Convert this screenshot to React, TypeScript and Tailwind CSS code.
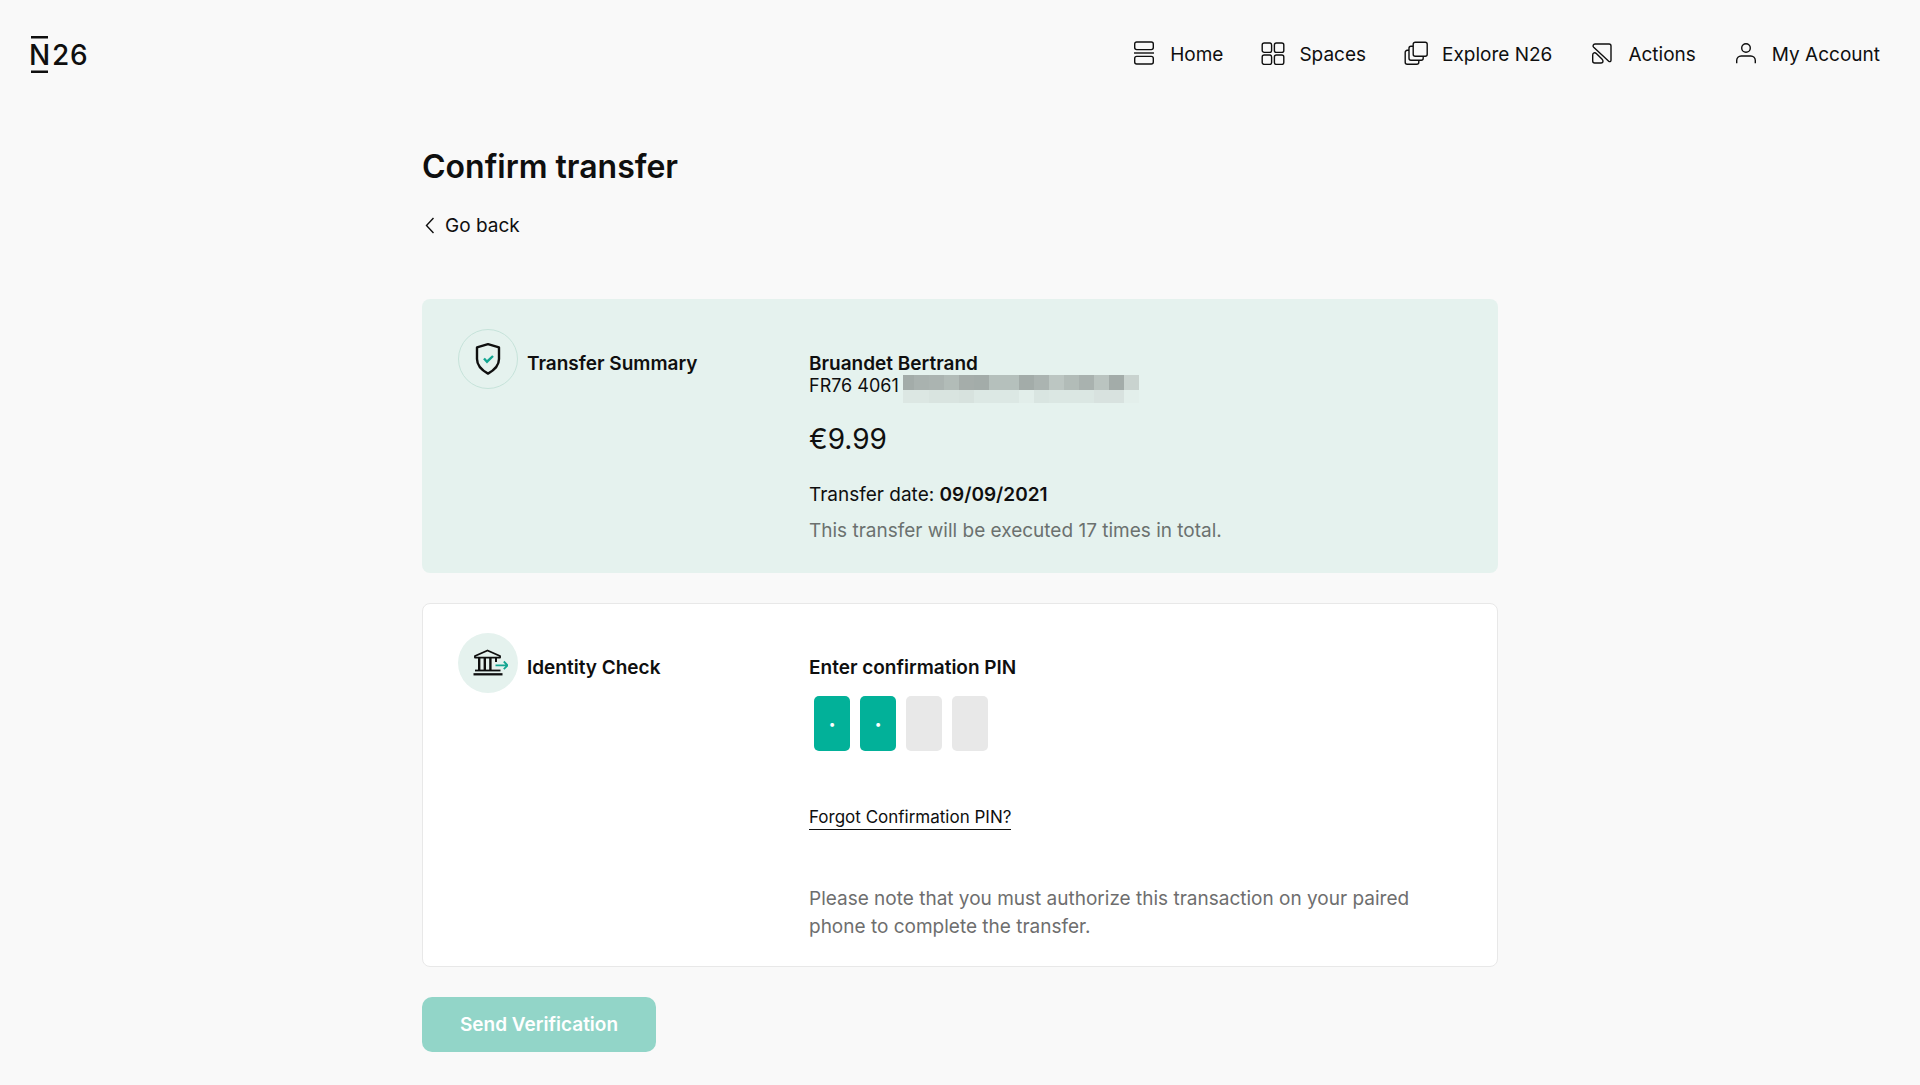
import type { ReactNode } from 'react';

const iconProps = {
  width: 24,
  height: 24,
  viewBox: '0 0 24 24',
  fill: 'none',
  stroke: 'currentColor',
  strokeWidth: 1.4,
  'aria-hidden': true,
} as const;

function HomeIcon() {
  return (
    <svg {...iconProps}>
      <rect x="2.7" y="1" width="18.6" height="7.6" rx="2" />
      <path d="M2 12h20" />
      <rect x="2.7" y="15.4" width="18.6" height="7.6" rx="2" />
    </svg>
  );
}

function SpacesIcon() {
  return (
    <svg {...iconProps}>
      <rect x="1.2" y="2" width="9.4" height="9.4" rx="2" />
      <rect x="13.4" y="2" width="9.4" height="9.4" rx="2" />
      <rect x="1.2" y="14" width="9.4" height="9.4" rx="2" />
      <rect x="13.4" y="14" width="9.4" height="9.4" rx="2" />
    </svg>
  );
}

function ExploreIcon() {
  return (
    <svg {...iconProps}>
      <rect x="9.2" y="1.2" width="14" height="14" rx="2" />
      <path d="M9 5.3H7a2 2 0 0 0-2 2v10a2 2 0 0 0 2 2h10.2a2 2 0 0 0 2-2v-2" />
      <path d="M5 9.3H3.2a2 2 0 0 0-2 2v10a2 2 0 0 0 2 2h9.6a2 2 0 0 0 2-2v-2" />
    </svg>
  );
}

function ActionsIcon() {
  return (
    <svg {...iconProps}>
      <path d="M5 3h14a2 2 0 0 1 2 2v14.2c0 1.4-1.3 1.9-2.3 1L3.7 6.3C2.4 5 3.2 3 5 3z" />
      <path d="M2.7 14c0-2.4 2.2-2.900 3.600-1.500l5.600 5.600c1.900 1.900 1.200 3.900-.8 3.900H4.700a2 2 0 0 1-2-2z" />
    </svg>
  );
}

function AccountIcon() {
  return (
    <svg {...iconProps}>
      <circle cx="12" cy="7" r="4.3" />
      <path d="M2.7 22.3v-2.800a4.500 4.500 0 0 1 4.500-4.500h9.600a4.500 4.500 0 0 1 4.500 4.500v2.800" />
    </svg>
  );
}

function Logo() {
  return (
    <svg width="60" height="38" viewBox="0 0 60 38" fill="#0f0f0f" role="img" aria-label="N26">
      <rect x="1" y="0" width="17" height="2.5" />
      <rect x="1" y="34.5" width="17" height="2.5" />
      <text x="-1" y="29" className="font-[Inter] text-[28px] font-medium">N</text>
      <text x="22" y="29" className="font-[Inter] text-[28px] font-medium">2</text>
      <text x="40" y="29" className="font-[Inter] text-[28px] font-medium">6</text>
    </svg>
  );
}

function ShieldIcon() {
  return (
    <svg width="36" height="36" viewBox="0 0 36 36" fill="none" aria-hidden="true">
      <path d="M18 3.200 29 6.400V18c0 7-4.500 11-11 14.600C11.500 29 7 25 7 18V6.400z" stroke="#0f0f0f" strokeWidth="2.4" strokeLinejoin="round" />
      <path d="m14 17.500 3 3.200 6-5.700" stroke="#12a591" strokeWidth="2.4" />
    </svg>
  );
}

function BankIcon() {
  return (
    <svg width="36" height="30" viewBox="0 0 36 30" fill="none" stroke="#0f0f0f" aria-hidden="true">
      <path d="M3 9.600V8l12.500-5.500L28 8v1.600z" strokeWidth="1.9" strokeLinejoin="round" />
      <path d="M7.200 10v12M12.800 10v12M18.400 10v12" strokeWidth="2.4" />
      <path d="M24 10v4" strokeWidth="2" />
      <path d="M3 22.500h25.500" strokeWidth="1.8" />
      <path d="M1.500 26.300h29" strokeWidth="2.3" />
      <path d="M23.500 17.300h12M31.800 13.500l3.800 3.800-3.800 3.800" stroke="#12a591" strokeWidth="1.8" />
    </svg>
  );
}

const navItems: { label: string; icon: ReactNode }[] = [
  { label: 'Home', icon: <HomeIcon /> },
  { label: 'Spaces', icon: <SpacesIcon /> },
  { label: 'Explore N26', icon: <ExploreIcon /> },
  { label: 'Actions', icon: <ActionsIcon /> },
  { label: 'My Account', icon: <AccountIcon /> },
];

const maskTop = [
  'w-[11px] bg-[#a3aca9]', 'w-[15px] bg-[#a9b2af]', 'w-[15px] bg-[#abb4b1]', 'w-[15px] bg-[#b2bcb8]',
  'w-[15px] bg-[#a5adaa]', 'w-[15px] bg-[#a3aca9]', 'w-[15px] bg-[#b5c0bc]', 'w-[15px] bg-[#b5c0bc]',
  'w-[15px] bg-[#a3aca9]', 'w-[15px] bg-[#abb4b1]', 'w-[15px] bg-[#bcc6c2]', 'w-[15px] bg-[#b2bcb8]',
  'w-[15px] bg-[#a9b2af]', 'w-[15px] bg-[#bac4c0]', 'w-[15px] bg-[#a3aca9]', 'w-[15px] bg-[#c9d3cf]',
];

const maskBottom = [
  'w-[26px] bg-[#dce7e3]', 'w-[30px] bg-[#d9e4e0]', 'w-[15px] bg-[#d7e2de]', 'w-[45px] bg-[#dce8e4]',
  'w-[15px] bg-[#e2eeea]', 'w-[15px] bg-[#d9e5e1]', 'w-[45px] bg-[#dbe7e3]', 'w-[30px] bg-[#d8e2df]',
  'w-[15px] bg-[#e3efeb]',
];

function Label({ icon, circle, children }: { icon: ReactNode; circle: string; children: ReactNode }) {
  return (
    <div className="flex items-center gap-[9px] self-start">
      <span className={'flex size-[60px] items-center justify-center rounded-full ' + circle}>{icon}</span>
      <h2 className="pt-[9px] font-semibold">{children}</h2>
    </div>
  );
}

export default function App() {
  return (
    <div className="min-h-screen bg-[#f9f9f9] pb-8 font-[Inter,sans-serif] text-[19px] leading-[28px] text-[#0f0f0f]">
      <header className="flex h-[110px] items-center justify-between pr-10 pl-[30px]">
        <a href="#home"><Logo /></a>
        <nav className="flex items-center gap-[38px]">
          {navItems.map((item) => (
            <a key={item.label} href="#" className="flex items-start gap-[14px]">
              {item.icon}
              {item.label}
            </a>
          ))}
        </nav>
      </header>

      <main className="mx-auto max-w-[1076px] pt-[38px]">
        <h1 className="text-[32px] leading-[38px] font-semibold">Confirm transfer</h1>
        <a href="#back" className="mt-[26px] flex w-fit items-center gap-[11px]">
          <svg width="12" height="18" viewBox="0 0 12 18" fill="none" stroke="currentColor" strokeWidth="1.4" aria-hidden="true">
            <path d="M11.500 1 4.500 8.500l7 7.500" />
          </svg>
          Go back
        </a>

        <section className="mt-[59px] grid grid-cols-[351px_1fr] rounded-lg bg-[#e5f2ee] pt-[30px] pr-9 pb-7 pl-9">
          <Label icon={<ShieldIcon />} circle="border border-[#c6e3da]">Transfer Summary</Label>
          <div className="pt-6">
            <p className="leading-[22px] font-semibold">Bruandet Bertrand</p>
            <div className="flex h-[22px] items-start gap-1">
              <p className="text-[18px] leading-[22px]">FR76 4061</p>
              <div aria-hidden="true">
                <div className="flex">{maskTop.map((c, i) => <span key={i} className={'h-[15px] ' + c} />)}</div>
                <div className="flex">{maskBottom.map((c, i) => <span key={i} className={'h-[13px] ' + c} />)}</div>
              </div>
            </div>
            <p className="mt-6 text-[28px] leading-[36px]">€9.99</p>
            <p className="mt-6">Transfer date: <b className="font-semibold">09/09/2021</b></p>
            <p className="mt-2 text-[#6b716f]">This transfer will be executed 17 times in total.</p>
          </div>
        </section>

        <section className="mt-[30px] grid grid-cols-[351px_1fr] rounded-lg border border-[#e8e8e8] bg-white pt-[29px] pr-9 pb-[25px] pl-[35px]">
          <Label icon={<BankIcon />} circle="bg-[#e5f2ee] pl-1">Identity Check</Label>
          <form className="pt-[21px]">
            <fieldset>
              <legend className="font-semibold">Enter confirmation PIN</legend>
              <div className="mt-[14px] flex gap-[10px] px-[5px]">
                {['1', '2', '', ''].map((digit, i) => (
                  <input
                    key={i}
                    type="password"
                    maxLength={1}
                    defaultValue={digit}
                    aria-label={'PIN digit ' + (i + 1)}
                    className={
                      'h-[55px] w-9 rounded-[5px] text-center text-[12px] text-white outline-none ' +
                      (digit ? 'bg-[#02b199]' : 'bg-[#e8e8e8]')
                    }
                  />
                ))}
              </div>
            </fieldset>
            <a href="#forgot" className="mt-[54px] inline-block border-b border-[#0f0f0f] text-[17px] leading-6">Forgot Confirmation PIN?</a>
            <p className="mt-[54px] text-[#6e6e6e]">
              Please note that you must authorize this transaction on your paired phone to complete the transfer.
            </p>
          </form>
        </section>

        <button type="button" className="mt-[30px] h-[55px] rounded-[10px] bg-[#92d5c8] px-[38px] font-semibold text-white">
          Send Verification
        </button>
      </main>
    </div>
  );
}
